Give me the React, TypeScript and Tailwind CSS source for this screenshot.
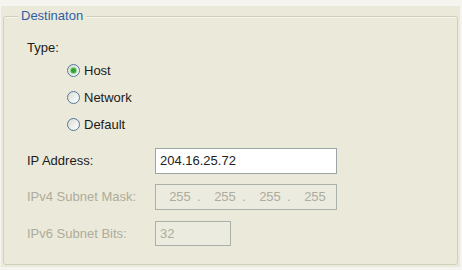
import React from 'react';

function Radio({ label, checked }: { label: string; checked?: boolean }) {
  return (
    <div className="flex h-[27px] items-center pl-[40px]">
      <div className="flex h-[13px] w-[13px] items-center justify-center rounded-full border border-[#55779a] bg-gradient-to-br from-[#dcdcd4] to-[#ffffff]">
        {checked && <div className="h-[5px] w-[5px] rounded-full bg-[#2fa62f] shadow-[0_0_1px_1px_#8fd08f]" />}
      </div>
      <span className="ml-[4px] text-[#1b1b1b]">{label}</span>
    </div>
  );
}

export default function App() {
  return (
    <div
      className="h-[270px] w-[462px] bg-[#f5f4ee] pb-[3px] pl-[1px] pr-[2px] pt-[6px] text-[13px] leading-[16px]"
      style={{ fontFamily: '"Liberation Sans", Arial, sans-serif' }}
    >
      <div className="h-full bg-[#ebe9d9] pl-[2px] pt-[10px]">
        {/* Group box */}
        <div className="relative h-[249px] w-[455px] rounded-[3px] border border-[#d0cfbe] pl-[23px] pt-[23px] shadow-[inset_0_1px_0_#f7f6ef]">
          <span className="absolute left-[14px] top-[-9px] bg-[#ebe9d9] px-[3px] text-[#2f5ea6]">Destinaton</span>

          <div className="text-[#1b1b1b]">Type:</div>
          <div className="mt-[1px]">
            <Radio label="Host" checked />
            <Radio label="Network" />
            <Radio label="Default" />
          </div>

          <div className="mt-[10px] flex items-center">
            <div className="w-[128px] text-[#1b1b1b]">IP Address:</div>
            <div className="flex h-[26px] w-[182px] items-center border border-[#9ca6a6] bg-white pl-[4px] text-[#222]">
              204.16.25.72
            </div>
          </div>

          <div className="mt-[10px] flex items-center">
            <div className="w-[128px] text-[#aeac9c]">IPv4 Subnet Mask:</div>
            <div className="flex h-[26px] w-[182px] items-center border border-[#aab1aa] bg-[#ecebdf] pl-[7px] text-[#aeac9c]">
              <span className="w-[34px] text-center">255</span>
              <span className="w-[11px]">.</span>
              <span className="w-[34px] text-center">255</span>
              <span className="w-[11px]">.</span>
              <span className="w-[34px] text-center">255</span>
              <span className="w-[11px]">.</span>
              <span className="w-[34px] text-center">255</span>
            </div>
          </div>

          <div className="mt-[11px] flex items-center">
            <div className="w-[128px] text-[#aeac9c]">IPv6 Subnet Bits:</div>
            <div className="flex h-[25px] w-[76px] items-center border border-[#aab1aa] bg-[#ecebdf] pl-[4px] text-[#aeac9c]">
              32
            </div>
          </div>
        </div>
      </div>
    </div>
  );
}
